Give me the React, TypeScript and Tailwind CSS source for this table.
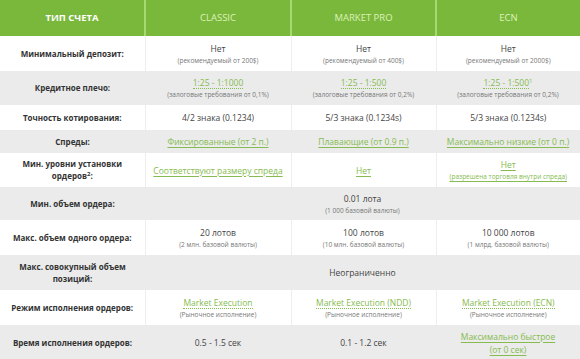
import React from "react";

type Cell = {
  main?: React.ReactNode;
  sub?: React.ReactNode;
  span?: number;
};

type Row = {
  label: React.ReactNode;
  cells: Cell[];
  h: string;
  gray: boolean;
};

function Dotted({ children }: { children: React.ReactNode }) {
  return (
    <span className="text-[#86bb4f] border-b border-dotted border-[#86bb4f]">
      {children}
    </span>
  );
}

function Link({ children }: { children: React.ReactNode }) {
  return <span className="text-[#86bb4f] underline underline-offset-2">{children}</span>;
}

const rows: Row[] = [
  {
    label: "Минимальный депозит:",
    h: "h-[35px]",
    gray: false,
    cells: [
      { main: "Нет", sub: "(рекомендуемый от 200$)" },
      { main: "Нет", sub: "(рекомендуемый от 400$)" },
      { main: "Нет", sub: "(рекомендуемый от 2000$)" },
    ],
  },
  {
    label: "Кредитное плечо:",
    h: "h-[34px]",
    gray: true,
    cells: [
      { main: <Dotted>1:25 - 1:1000</Dotted>, sub: "(залоговые требования от 0,1%)" },
      { main: <Dotted>1:25 - 1:500</Dotted>, sub: "(залоговые требования от 0,2%)" },
      {
        main: (
          <>
            <Dotted>1:25 - 1:500</Dotted>
            <sup className="text-[#86bb4f] text-[6px]">1</sup>
          </>
        ),
        sub: "(залоговые требования от 0,2%)",
      },
    ],
  },
  {
    label: "Точность котирования:",
    h: "h-[25px]",
    gray: false,
    cells: [
      { main: "4/2 знака (0.1234)" },
      { main: "5/3 знака (0.1234s)" },
      { main: "5/3 знака (0.1234s)" },
    ],
  },
  {
    label: "Спреды:",
    h: "h-[23px]",
    gray: true,
    cells: [
      { main: <Link>Фиксированные (от 2 п.)</Link> },
      { main: <Link>Плавающие (от 0.9 п.)</Link> },
      { main: <Link>Максимально низкие (от 0 п.)</Link> },
    ],
  },
  {
    label: (
      <>
        Мин. уровни установки
        <br />
        ордеров<sup className="text-[6px]">2</sup>:
      </>
    ),
    h: "h-[34px]",
    gray: false,
    cells: [
      { main: <Link>Соответствуют размеру спреда</Link> },
      { main: <Link>Нет</Link> },
      {
        main: <Link>Нет</Link>,
        sub: <Link>(разрешена торговля внутри спреда)</Link>,
      },
    ],
  },
  {
    label: "Мин. объем ордера:",
    h: "h-[33px]",
    gray: true,
    cells: [{ main: "0.01 лота", sub: "(1 000 базовой валюты)", span: 3 }],
  },
  {
    label: "Макс. объем одного ордера:",
    h: "h-[35px]",
    gray: false,
    cells: [
      { main: "20 лотов", sub: "(2 млн. базовой валюты)" },
      { main: "100 лотов", sub: "(10 млн. базовой валюты)" },
      { main: "10 000 лотов", sub: "(1 млрд. базовой валюты)" },
    ],
  },
  {
    label: (
      <>
        Макс. совокупный объем
        <br />
        позиций:
      </>
    ),
    h: "h-[35px]",
    gray: true,
    cells: [{ main: "Неограниченно", span: 3 }],
  },
  {
    label: "Режим исполнения ордеров:",
    h: "h-[35px]",
    gray: false,
    cells: [
      { main: <Dotted>Market Execution</Dotted>, sub: "(Рыночное исполнение)" },
      { main: <Dotted>Market Execution (NDD)</Dotted>, sub: "(Рыночное исполнение)" },
      { main: <Dotted>Market Execution (ECN)</Dotted>, sub: "(Рыночное исполнение)" },
    ],
  },
  {
    label: "Время исполнения ордеров:",
    h: "h-[35px]",
    gray: true,
    cells: [
      { main: "0.5 - 1.5 сек" },
      { main: "0.1 - 1.2 сек" },
      {
        main: (
          <Link>
            Максимально быстрое
            <br />
            (от 0 сек)
          </Link>
        ),
      },
    ],
  },
];

export default function App() {
  return (
    <div
      className="w-[580px] h-[359px] overflow-hidden bg-white"
      style={{ fontFamily: "'Open Sans', 'Liberation Sans', sans-serif" }}
    >
      <table className="w-[580px] table-fixed border-collapse text-center">
        <colgroup>
          <col className="w-[145px]" />
          <col className="w-[146px]" />
          <col className="w-[145px]" />
          <col className="w-[144px]" />
        </colgroup>
        <thead>
          <tr className="h-[36px] bg-[#7ab83c]">
            <th className="text-[9.5px] font-bold text-white">ТИП СЧЕТА</th>
            <th className="border-l-2 border-[#a8d870] text-[9.5px] font-normal text-[#dcf2b8]">
              CLASSIC
            </th>
            <th className="border-l-2 border-[#a8d870] text-[9.5px] font-normal text-[#dcf2b8]">
              MARKET PRO
            </th>
            <th className="border-l-2 border-[#a8d870] text-[9.5px] font-normal text-[#dcf2b8]">
              ECN
            </th>
          </tr>
        </thead>
        <tbody>
          {rows.map((row, i) => (
            <tr key={i} className={`${row.h} ${row.gray ? "bg-[#ebebeb]" : "bg-white"}`}>
              <td className="p-0 text-[8px] font-bold leading-[12px] text-[#333]">
                {row.label}
              </td>
              {row.cells.map((cell, j) => (
                <td
                  key={j}
                  colSpan={cell.span ?? 1}
                  className={`p-0 ${row.gray ? "" : "border-l border-[#eeeeee]"}`}
                >
                  <div className="text-[8.5px] leading-[13px] text-[#444]">{cell.main}</div>
                  {cell.sub && (
                    <div className="mt-[1px] text-[6.5px] leading-[10px] text-[#777]">
                      {cell.sub}
                    </div>
                  )}
                </td>
              ))}
            </tr>
          ))}
        </tbody>
      </table>
    </div>
  );
}
